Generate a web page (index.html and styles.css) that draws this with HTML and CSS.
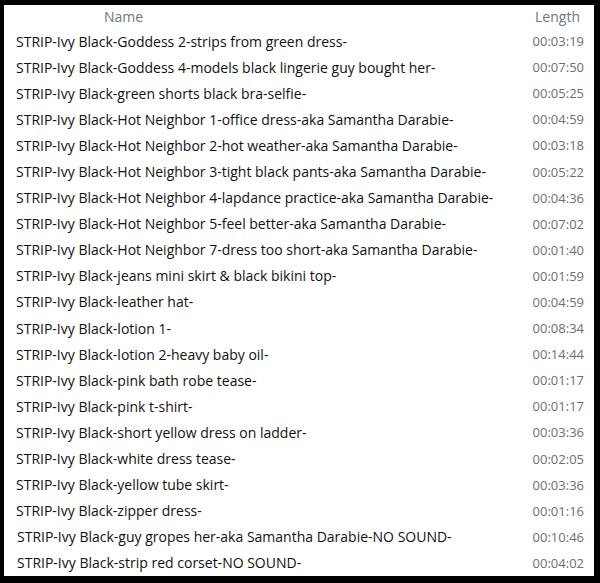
FILE: index.html
```html
<!DOCTYPE html>
<html lang="en">
<head>
  <meta charset="UTF-8" />
  <title>Strip list</title>
  <link rel="stylesheet" href="styles.css">
</head>
<body>
  <div class="panel">
    <div class="head">
      <span class="head-name">Name</span>
      <span class="head-len">Length</span>
    </div>
    <!-- file rows -->
    <ul class="files">
      <li><span class="name">STRIP-Ivy Black-Goddess 2-strips from green dress-</span><span class="len">00:03:19</span></li>
      <li><span class="name">STRIP-Ivy Black-Goddess 4-models black lingerie guy bought her-</span><span class="len">00:07:50</span></li>
      <li><span class="name">STRIP-Ivy Black-green shorts black bra-selfie-</span><span class="len">00:05:25</span></li>
      <li><span class="name">STRIP-Ivy Black-Hot Neighbor 1-office dress-aka Samantha Darabie-</span><span class="len">00:04:59</span></li>
      <li><span class="name">STRIP-Ivy Black-Hot Neighbor 2-hot weather-aka Samantha Darabie-</span><span class="len">00:03:18</span></li>
      <li><span class="name">STRIP-Ivy Black-Hot Neighbor 3-tight black pants-aka Samantha Darabie-</span><span class="len">00:05:22</span></li>
      <li><span class="name">STRIP-Ivy Black-Hot Neighbor 4-lapdance practice-aka Samantha Darabie-</span><span class="len">00:04:36</span></li>
      <li><span class="name">STRIP-Ivy Black-Hot Neighbor 5-feel better-aka Samantha Darabie-</span><span class="len">00:07:02</span></li>
      <li><span class="name">STRIP-Ivy Black-Hot Neighbor 7-dress too short-aka Samantha Darabie-</span><span class="len">00:01:40</span></li>
      <li><span class="name">STRIP-Ivy Black-jeans mini skirt &amp; black bikini top-</span><span class="len">00:01:59</span></li>
      <li><span class="name">STRIP-Ivy Black-leather hat-</span><span class="len">00:04:59</span></li>
      <li><span class="name">STRIP-Ivy Black-lotion 1-</span><span class="len">00:08:34</span></li>
      <li><span class="name">STRIP-Ivy Black-lotion 2-heavy baby oil-</span><span class="len">00:14:44</span></li>
      <li><span class="name">STRIP-Ivy Black-pink bath robe tease-</span><span class="len">00:01:17</span></li>
      <li><span class="name">STRIP-Ivy Black-pink t-shirt-</span><span class="len">00:01:17</span></li>
      <li><span class="name">STRIP-Ivy Black-short yellow dress on ladder-</span><span class="len">00:03:36</span></li>
      <li><span class="name">STRIP-Ivy Black-white dress tease-</span><span class="len">00:02:05</span></li>
      <li><span class="name">STRIP-Ivy Black-yellow tube skirt-</span><span class="len">00:03:36</span></li>
      <li><span class="name">STRIP-Ivy Black-zipper dress-</span><span class="len">00:01:16</span></li>
      <li class="pasted"><span class="name">STRIP-Ivy Black-guy gropes her-aka Samantha Darabie-NO SOUND-</span><span class="len">00:10:46</span></li>
      <li class="pasted"><span class="name">STRIP-Ivy Black-strip red corset-NO SOUND-</span><span class="len">00:04:02</span></li>
    </ul>
  </div>
</body>
</html>
```

FILE: styles.css
```css
body {
  margin: 0;
  background-color: #000;
  font-family: 'Open Sans', 'Noto Sans', sans-serif;
  font-size: 14px;
}

.panel {
  margin: 5px 6px 7px 4px;
  height: 571px;
  background: #fff;
  padding: 0 10px 0 12px;
  box-sizing: border-box;
}

.head {
  display: flex;
  justify-content: space-between;
  height: 23px;
  align-items: center;
  color: #6d7683;
}

.head-name {
  padding-left: 88px;
}

.head-len {
  padding-right: 4px;
}

.files {
  list-style: none;
  margin: 0;
  padding: 0;
}

.files li {
  display: flex;
  justify-content: space-between;
  align-items: center;
  height: 26.1px;
}

.name {
  color: #111;
}

.len {
  color: #6e6e6e;
  font-size: 13px;
}

.pasted .name {
  padding-left: 1px;
}
```
